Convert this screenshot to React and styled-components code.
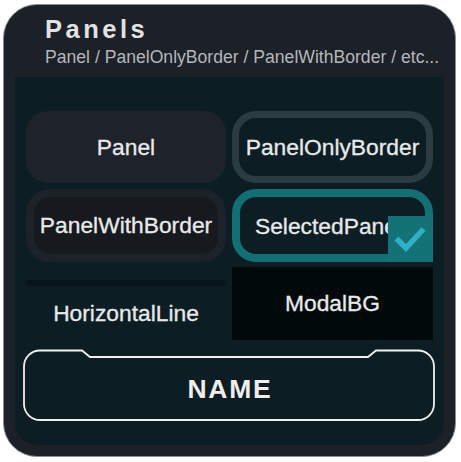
import React from "react";
import styled, { createGlobalStyle } from "styled-components";

const Global = createGlobalStyle`
  html, body { margin: 0; padding: 0; background: #ffffff; }
  body { font-family: "Liberation Sans", Arial, sans-serif; }
`;

const Frame = styled.div`
  box-sizing: border-box;
  width: 453px;
  height: 453px;
  margin: 4px 0 0 3px;
  border: 1px solid #8a8e92;
  border-radius: 34px;
  background: #1c2027;
  padding: 0 11px 11px 11px;
  display: flex;
  flex-direction: column;
  overflow: hidden;
`;

const Header = styled.header`
  box-sizing: border-box;
  height: 72px;
  padding: 8.6px 0 0 30px;
  display: flex;
  flex-direction: column;
`;

const Title = styled.h1`
  margin: 0;
  font-family: "Liberation Sans", Arial, sans-serif;
  font-size: 25.5px;
  line-height: 30px;
  font-weight: 700;
  letter-spacing: 3.5px;
  color: #e2e3e4;
`;

const Subtitle = styled.div`
  margin-top: 3.4px;
  font-size: 17.6px;
  line-height: 20px;
  color: #b3b7bb;
  white-space: nowrap;
`;

const Body = styled.main`
  box-sizing: border-box;
  flex: 1;
  background: #0c1e23;
  border-radius: 0 0 22px 22px;
  padding: 34px 11px 24px 11px;
  display: flex;
  flex-direction: column;
`;

const Grid = styled.div`
  display: grid;
  grid-template-columns: 200px 201px;
  grid-template-rows: 72px 73px 73px;
  column-gap: 6px;
  row-gap: 5.5px;
`;

const Label = styled.span`
  font-size: 22.8px;
  color: #e8e9ea;
  white-space: nowrap;
  -webkit-text-stroke: 0.3px #e8e9ea;
`;

const CellBase = styled.div`
  box-sizing: border-box;
  display: flex;
  align-items: center;
  justify-content: center;
  overflow: hidden;
  position: relative;
`;

const PanelCell = styled(CellBase)`
  background: #1e2229;
  border-radius: 22px;
`;

const OnlyBorderCell = styled(CellBase)`
  border: 7px solid #2a3c41;
  border-radius: 24px;
`;

const WithBorderCell = styled(CellBase)`
  background: #1d2128;
  border-radius: 24px;
  padding: 8px;
`;

const WithBorderInner = styled.div`
  flex: 1;
  align-self: stretch;
  background: #16191e;
  border-radius: 17px;
  display: flex;
  align-items: center;
  justify-content: center;
`;

const SelectedCell = styled(CellBase)`
  border: 8px solid #127074;
  border-radius: 24px;
  background: #0c1e23;
  padding: 3px 8px 0 0;
  overflow: visible;
`;

const CheckBadge = styled.div`
  position: absolute;
  right: -8px;
  bottom: -8px;
  width: 45px;
  height: 46px;
  background: #137276;
  display: flex;
  align-items: center;
  justify-content: center;
  z-index: 1;
`;

const LineCell = styled.div`
  display: flex;
  flex-direction: column;
  padding-top: 13px;
`;

const HLine = styled.div`
  height: 6px;
  border-radius: 3px;
  background: #08151a;
`;

const LineLabelArea = styled.div`
  flex: 1;
  display: flex;
  align-items: center;
  justify-content: center;
`;

const ModalCell = styled(CellBase)`
  background: #02090b;
`;

const NameButton = styled.button`
  position: relative;
  box-sizing: border-box;
  height: 72px;
  margin: 9px -2px 0 -3px;
  padding: 8px 0 0 2px;
  background: transparent;
  border: none;
  display: flex;
  align-items: center;
  justify-content: center;
  font-family: "Liberation Sans", Arial, sans-serif;
  font-size: 26.5px;
  font-weight: 700;
  letter-spacing: 1.8px;
  color: #eeeeee;
`;

const FrameSvg = styled.svg`
  position: absolute;
  left: 0;
  top: 0;
  width: 412px;
  height: 72px;
  pointer-events: none;
`;

function Check() {
  return (
    <svg width="45" height="46" viewBox="0 0 45 46">
      <path
        d="M8.5 22.5 L18 32 L35.5 13"
        fill="none"
        stroke="#2eb1c8"
        strokeWidth="5.5"
        strokeLinecap="butt"
        strokeLinejoin="miter"
      />
    </svg>
  );
}

function NameFrame() {
  return (
    <FrameSvg viewBox="0 0 412 72">
      <path
        d="M17 1.5 L59 1.5 L67 8 L345 8 L353 1.5 L395 1.5 A16 16 0 0 1 411 17.5 L411 55 A16 16 0 0 1 395 71 L17 71 A16 16 0 0 1 1 55 L1 17.5 A16 16 0 0 1 17 1.5 Z"
        fill="none"
        stroke="#f0f0f0"
        strokeWidth="1.8"
      />
    </FrameSvg>
  );
}

export default function App() {
  return (
    <>
      <Global />
      <Frame>
        <Header>
          <Title>Panels</Title>
          <Subtitle>Panel / PanelOnlyBorder / PanelWithBorder / etc...</Subtitle>
        </Header>
        <Body>
          <Grid>
            <PanelCell>
              <Label>Panel</Label>
            </PanelCell>
            <OnlyBorderCell>
              <Label>PanelOnlyBorder</Label>
            </OnlyBorderCell>
            <WithBorderCell>
              <WithBorderInner>
                <Label>PanelWithBorder</Label>
              </WithBorderInner>
            </WithBorderCell>
            <SelectedCell>
              <Label>SelectedPanel</Label>
              <CheckBadge>
                <Check />
              </CheckBadge>
            </SelectedCell>
            <LineCell>
              <HLine />
              <LineLabelArea>
                <Label>HorizontalLine</Label>
              </LineLabelArea>
            </LineCell>
            <ModalCell>
              <Label>ModalBG</Label>
            </ModalCell>
          </Grid>
          <NameButton>
            <NameFrame />
            NAME
          </NameButton>
        </Body>
      </Frame>
    </>
  );
}
